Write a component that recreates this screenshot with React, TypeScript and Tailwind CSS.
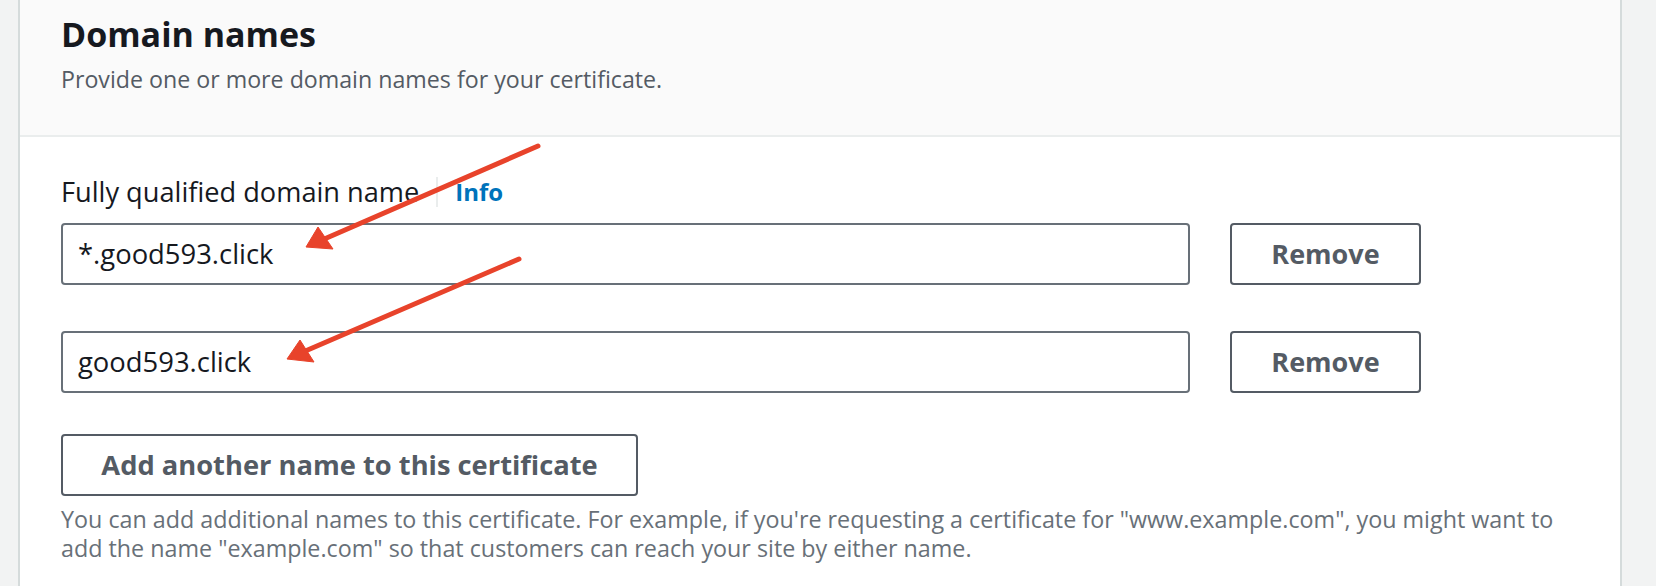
import React from "react";

export default function App() {
  return (
    <div
      className="relative flex h-[586px] w-[1656px] overflow-hidden bg-[#f2f3f3]"
      style={{ fontFamily: '"Open Sans", "Noto Sans", sans-serif' }}
    >
      <div className="w-[18px] shrink-0" />
      <div className="flex w-[1604px] shrink-0 flex-col border-x-2 border-[#d5dbdb] bg-white">
        <div className="h-[137px] border-b-2 border-[#eaeded] bg-[#fafafa] pl-[41px] pt-[12px]">
          <h2 className="text-[34px] font-bold leading-[44px] text-[#16191f]">Domain names</h2>
          <p className="mt-[7px] text-[23.2px] leading-[32px] text-[#545b64]">
            Provide one or more domain names for your certificate.
          </p>
        </div>
        <div className="pl-[41px] pt-[39px]">
          <div className="flex items-center leading-[32px]">
            <span className="text-[27.2px] text-[#16191f]">Fully qualified domain name</span>
            <span className="mx-[17px] h-[30px] w-[2px] bg-[#eaeded]" />
            <span className="text-[24px] font-bold text-[#0073bb]">Info</span>
          </div>
          <div className="mt-[15px] flex flex-col gap-[46px]">
            {["*.good593.click", "good593.click"].map((v) => (
              <div key={v} className="flex items-center gap-[40px]">
                <div className="flex h-[62px] w-[1129px] items-center rounded-[4px] border-2 border-[#687078] pl-[15px] text-[27.4px] text-[#16191f]">
                  {v}
                </div>
                <div className="flex h-[62px] w-[191px] items-center justify-center rounded-[4px] border-2 border-[#545b64] text-[27px] font-bold text-[#545b64]">
                  Remove
                </div>
              </div>
            ))}
          </div>
          <div className="mt-[41px] flex h-[62px] w-[577px] items-center justify-center rounded-[4px] border-2 border-[#545b64] text-[27.3px] font-bold text-[#545b64]">
            Add another name to this certificate
          </div>
          <p className="mt-[9px] w-[1520px] text-[23.3px] leading-[29px] text-[#687078]">
            You can add additional names to this certificate. For example, if you're requesting a certificate for
            "www.example.com", you might want to add the name "example.com" so that customers can reach your site by
            either name.
          </p>
        </div>
      </div>
      <div className="flex-1" />
      <svg
        className="pointer-events-none absolute left-0 top-0"
        width="1656"
        height="586"
        viewBox="0 0 1656 586"
      >
        <g fill="#e8432b" stroke="#e8432b">
          <line x1="538" y1="146" x2="322" y2="240" strokeWidth="5" strokeLinecap="round" />
          <polygon points="306,247 318,227 333,249" strokeWidth="1" strokeLinejoin="round" />
          <line x1="519" y1="259" x2="303" y2="352" strokeWidth="5" strokeLinecap="round" />
          <polygon points="287,359 300,340 314,362" strokeWidth="1" strokeLinejoin="round" />
        </g>
      </svg>
    </div>
  );
}
